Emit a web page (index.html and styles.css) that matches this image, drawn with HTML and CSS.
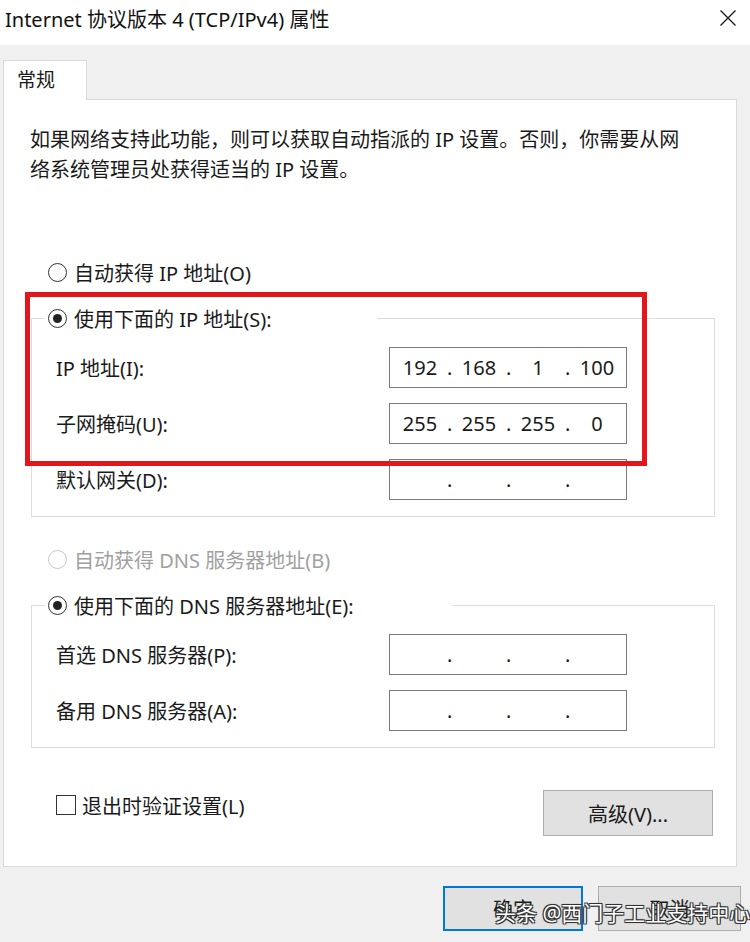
FILE: index.html
```html
<!DOCTYPE html>
<html lang="zh-CN">
<head>
<meta charset="utf-8">
<title>Internet 协议版本 4 (TCP/IPv4) 属性</title>
<link rel="stylesheet" href="styles.css">
</head>
<body>
<div class="titlebar">
  <span class="title">Internet 协议版本 4 (TCP/IPv4) 属性</span>
  <svg class="close" viewBox="0 0 16 16" width="16" height="16"><path d="M0.5 0.5 L15.5 15.5 M15.5 0.5 L0.5 15.5" stroke="#1a1a1a" stroke-width="1.4" fill="none"/></svg>
</div>
<div class="tabstrip"><div class="tab">常规</div></div>
<div class="panel">
  <p class="desc">如果网络支持此功能，则可以获取自动指派的 IP 设置。否则，你需要从网<br>络系统管理员处获得适当的 IP 设置。</p>
  <div class="radio-row"><span class="radio"></span><span>自动获得 IP 地址(O)</span></div>
  <fieldset class="group">
    <legend class="lg1"><span class="legend-inner"><span class="radio checked"></span><span>使用下面的 IP 地址(S):</span></span></legend>
    <div class="field-row first"><span class="lbl">IP 地址(I):</span><div class="ip"><span class="seg">192</span><span class="dot">.</span><span class="seg">168</span><span class="dot">.</span><span class="seg">1</span><span class="dot">.</span><span class="seg">100</span></div></div>
    <div class="field-row"><span class="lbl">子网掩码(U):</span><div class="ip"><span class="seg">255</span><span class="dot">.</span><span class="seg">255</span><span class="dot">.</span><span class="seg">255</span><span class="dot">.</span><span class="seg">0</span></div></div>
    <div class="field-row"><span class="lbl">默认网关(D):</span><div class="ip"><span class="seg"></span><span class="dot">.</span><span class="seg"></span><span class="dot">.</span><span class="seg"></span><span class="dot">.</span><span class="seg"></span></div></div>
  </fieldset>
  <div class="radio-row disabled second"><span class="radio"></span><span>自动获得 DNS 服务器地址(B)</span></div>
  <fieldset class="group">
    <legend class="lg2"><span class="legend-inner"><span class="radio checked"></span><span>使用下面的 DNS 服务器地址(E):</span></span></legend>
    <div class="field-row first"><span class="lbl">首选 DNS 服务器(P):</span><div class="ip"><span class="seg"></span><span class="dot">.</span><span class="seg"></span><span class="dot">.</span><span class="seg"></span><span class="dot">.</span><span class="seg"></span></div></div>
    <div class="field-row"><span class="lbl">备用 DNS 服务器(A):</span><div class="ip"><span class="seg"></span><span class="dot">.</span><span class="seg"></span><span class="dot">.</span><span class="seg"></span><span class="dot">.</span><span class="seg"></span></div></div>
  </fieldset>
  <div class="bottom-row">
    <label class="check"><span class="box"></span><span>退出时验证设置(L)</span></label>
    <button class="btn adv">高级(V)...</button>
  </div>
</div>
<div class="actions">
  <button class="btn ok">确定</button>
  <button class="btn cancel">取消</button>
</div>
<div class="redbox"></div>
<div class="watermark">头条 @西门子工业支持中心</div>
</body>
</html>
```
FILE: styles.css
```css
* { box-sizing: border-box; }
html, body { margin: 0; padding: 0; }
body {
  width: 750px;
  height: 942px;
  background: #f0f0f0;
  font-family: "Noto Sans", "Noto Sans CJK SC", sans-serif;
  font-size: 20px;
  color: #1a1a1a;
  position: relative;
  overflow: hidden;
}
.titlebar {
  height: 45px;
  background: #fff;
  display: flex;
  justify-content: space-between;
  align-items: flex-start;
}
.title { padding-left: 5px; line-height: 40px; color: #111; }
.close { margin: 10px 14px 0 0; }
.tabstrip {
  height: 54px;
  display: flex;
  align-items: flex-end;
  padding-left: 3px;
}
.tab {
  width: 84px;
  height: 40px;
  margin-bottom: -1px;
  background: #fff;
  border: 1px solid #d9d9d9;
  border-bottom: none;
  padding-left: 13px;
  line-height: 38px;
  font-size: 19px;
  position: relative;
  z-index: 1;
}
.panel {
  margin-left: 3px;
  width: 734px;
  height: 768px;
  background: #fff;
  border: 1px solid #d9d9d9;
  padding-right: 23px;
}
.desc {
  margin: 25px 0 0;
  padding-left: 26px;
  line-height: 30px;
  font-size: 20px;
  white-space: nowrap;
}
.radio-row {
  margin-top: 72px;
  padding-left: 44px;
  height: 30px;
  display: flex;
  align-items: center;
  gap: 7px;
}
.radio-row.second { margin-top: 27px; }
.radio {
  width: 19px;
  height: 19px;
  border: 1px solid #333;
  border-radius: 50%;
  background: #fff;
  display: flex;
  align-items: center;
  justify-content: center;
  flex: none;
}
.radio.checked::after {
  content: "";
  width: 9px;
  height: 9px;
  border-radius: 50%;
  background: #222;
}
.disabled { color: #a0a0a0; }
.disabled .radio { border-color: #c8c8c8; }
.group {
  margin: 16px 0 0 27px;
  width: 684px;
  border: 1px solid #dcdcdc;
  padding: 0 0 16px 0;
  min-width: 0;
}
.group legend {
  margin-left: 13px;
  padding: 0 0 0 3px;
  height: 30px;
}
.lg1 { width: 332px; }
.lg2 { width: 408px; }
.legend-inner {
  display: flex;
  align-items: center;
  gap: 7px;
  height: 30px;
}
.field-row {
  display: grid;
  grid-template-columns: 333px 238px;
  align-items: center;
  height: 41px;
  margin-top: 15px;
  padding-left: 24px;
}
.field-row.first { margin-top: 14px; }
.lbl { white-space: nowrap; }
.ip {
  height: 41px;
  border: 1px solid #7a7a7a;
  background: #fff;
  display: flex;
  align-items: center;
  padding-left: 3px;
}
.seg {
  width: 54px;
  text-align: center;
  font-size: 20px;
  line-height: 30px;
}
.dot {
  width: 5px;
  text-align: center;
  font-size: 20px;
  line-height: 30px;
}
.bottom-row {
  margin-top: 42px;
  padding-left: 52px;
  display: flex;
  justify-content: space-between;
  align-items: flex-start;
}
.check {
  display: flex;
  align-items: center;
  gap: 6px;
  height: 30px;
}
.box {
  width: 20px;
  height: 20px;
  border: 1.5px solid #333;
  background: #fff;
}
.btn {
  background: #e1e1e1;
  border: 1px solid #adadad;
  font-family: inherit;
  font-size: 20px;
  color: #1a1a1a;
  padding: 0;
  margin: 0;
}
.adv { width: 170px; height: 46px; }
.actions {
  display: flex;
  justify-content: flex-end;
  gap: 15px;
  padding-right: 9px;
  margin-top: 19px;
}
.ok { width: 140px; height: 45px; border: 2px solid #0078d7; }
.cancel { width: 143px; height: 45px; }
.redbox {
  position: absolute;
  left: 25px;
  top: 292px;
  width: 622px;
  height: 174px;
  border: 5px solid #e3161c;
}
.watermark {
  position: absolute;
  left: 495px;
  top: 898px;
  font-size: 21px;
  line-height: 30px;
  color: #fff;
  white-space: nowrap;
  text-shadow: 1px 1px 0 #333, -1px -1px 0 #333, 1px -1px 0 #333, -1px 1px 0 #333, 0 0 2px #000;
}
```
